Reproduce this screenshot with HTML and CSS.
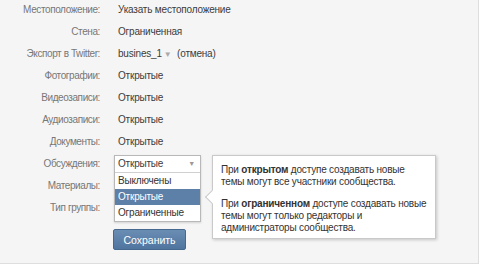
FILE: index.html
```html
<!DOCTYPE html>
<html lang="ru">
<head>
  <meta charset="UTF-8">
  <title>Настройки сообщества</title>
  <link rel="stylesheet" href="styles.css">
</head>
<body>
  <div class="panel">
    <div class="form">
      <div class="row"><div class="label">Местоположение:</div><div class="value">Указать местоположение</div></div>
      <div class="row"><div class="label">Стена:</div><div class="value">Ограниченная</div></div>
      <div class="row">
        <div class="label">Экспорт в Twitter:</div>
        <div class="value">busines_1<span class="tw-arrow">▼</span> <span class="cancel">(отмена)</span></div>
      </div>
      <div class="row"><div class="label">Фотографии:</div><div class="value">Открытые</div></div>
      <div class="row"><div class="label">Видеозаписи:</div><div class="value">Открытые</div></div>
      <div class="row"><div class="label">Аудиозаписи:</div><div class="value">Открытые</div></div>
      <div class="row"><div class="label">Документы:</div><div class="value">Открытые</div></div>
      <div class="row">
        <div class="label">Обсуждения:</div>
        <div class="value">
          <div class="select">
            <div class="select-head">Открытые<span class="sel-arrow">▼</span></div>
            <ul class="options">
              <li>Выключены</li>
              <li class="active">Открытые</li>
              <li>Ограниченные</li>
            </ul>
            <div class="tip">
              <p>При <b>открытом</b> доступе создавать новые<br>темы могут все участники сообщества.</p>
              <p>При <b>ограниченном</b> доступе создавать новые<br>темы могут только редакторы и<br>администраторы сообщества.</p>
            </div>
          </div>
        </div>
      </div>
      <div class="row"><div class="label">Материалы:</div><div class="value"></div></div>
      <div class="row"><div class="label">Тип группы:</div><div class="value"></div></div>
      <div class="row buttons"><div class="label"></div><div class="value"><button class="save">Сохранить</button></div></div>
    </div>
  </div>
</body>
</html>
```

FILE: styles.css
```css
body {
  margin: 0;
  background: #fff;
  font-family: "Liberation Sans", Arial, sans-serif;
  font-size: 10px;
  letter-spacing: -0.2px;
}

.panel {
  width: 478px;
  height: 263px;
  background: #f5f5f5;
  border-right: 1px solid #dedede;
  border-bottom: 1px solid #dedede;
  overflow: hidden;
}

.form {
  margin-top: -1px;
}

.row {
  display: flex;
  height: 22px;
  line-height: 22px;
}

.label {
  width: 100px;
  text-align: right;
  color: #777;
  letter-spacing: -0.4px;
}

.value {
  margin-left: 18px;
  color: #3c3c3c;
  position: relative;
}

.tw-arrow {
  color: #aaa;
  font-size: 8px;
  margin-left: 2px;
  margin-right: 3px;
}

.select {
  position: absolute;
  left: -4px;
  top: 2px;
  width: 85px;
  background: #fff;
  border: 1px solid #b8b8b8;
  box-shadow: 0 1px 2px rgba(0, 0, 0, 0.15);
  line-height: 16px;
}

.select-head {
  padding-left: 3px;
  height: 16px;
  position: relative;
}

.sel-arrow {
  position: absolute;
  right: 5px;
  top: 0;
  color: #999;
  font-size: 7px;
}

.options {
  list-style: none;
  margin: 0;
  padding: 0;
  border-top: 1px solid #d0d0d0;
}

.options li {
  height: 16px;
  padding-left: 3px;
  color: #333;
}

.options li.active {
  background: #5c80a8;
  color: #fff;
}

.tip {
  position: absolute;
  left: 97px;
  top: -1px;
  width: 206px;
  height: 68px;
  padding: 8px 8px 6px;
  background: #fff;
  border: 1px solid #c9c9c9;
  box-shadow: 1px 1px 3px rgba(0, 0, 0, 0.2);
  color: #333;
  line-height: 12px;
  white-space: nowrap;
}

.tip::before {
  content: "";
  position: absolute;
  left: -6px;
  top: 36px;
  width: 9px;
  height: 9px;
  background: #fff;
  border-left: 1px solid #c9c9c9;
  border-bottom: 1px solid #c9c9c9;
  transform: rotate(45deg);
}

.tip p {
  margin: 0 0 10px;
}

.buttons {
  margin-top: 10px;
}

.save {
  margin-left: -5px;
  width: 73px;
  height: 21px;
  border: 1px solid #45688e;
  border-radius: 2px;
  background: linear-gradient(#6a8db3, #4f759f);
  color: #fff;
  font-family: "Liberation Sans", Arial, sans-serif;
  font-size: 10.5px;
  padding: 0;
}
```
